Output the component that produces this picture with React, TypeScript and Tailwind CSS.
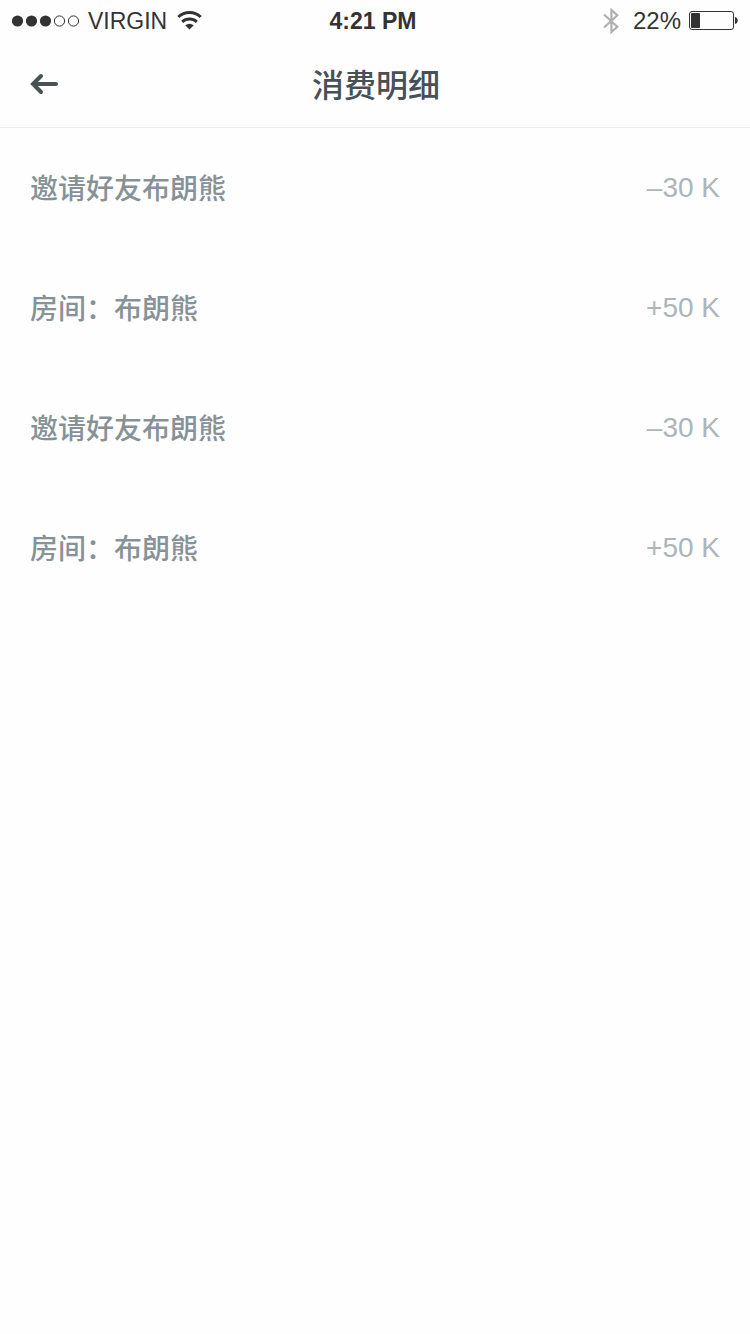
import React from "react";

type Entry = { id: number; label: string; amount: string };

const entries: Entry[] = [
  { id: 1, label: "邀请好友布朗熊", amount: "–30 K" },
  { id: 2, label: "房间：布朗熊", amount: "+50 K" },
  { id: 3, label: "邀请好友布朗熊", amount: "–30 K" },
  { id: 4, label: "房间：布朗熊", amount: "+50 K" },
];

function SignalDots() {
  return (
    <svg width="68" height="12" viewBox="0 0 68 12" aria-hidden="true">
      {[5.5, 19.5, 33.5].map((x) => (
        <circle key={x} cx={x} cy="6" r="5.6" fill="#333333" />
      ))}
      {[47.5, 61.5].map((x) => (
        <circle key={x} cx={x} cy="6" r="5.1" fill="none" stroke="#333333" />
      ))}
    </svg>
  );
}

function WifiIcon() {
  return (
    <svg width="25" height="19" viewBox="0 0 25 19" aria-hidden="true">
      <g fill="none" stroke="#333333" strokeWidth="3">
        <path d="M1.3 6a16.5 16.5 0 0 1 22.4 0" />
        <path d="M5.2 10.900a10.800 10.800 0 0 1 14.600 0" />
      </g>
      <path d="M12.5 18.500l-4.300-4.200a7 7 0 0 1 8.600 0z" fill="#333333" />
    </svg>
  );
}

function BluetoothIcon() {
  return (
    <svg width="16" height="28" viewBox="0 0 16 28" fill="none" stroke="#b0b0b0" strokeWidth="2.2" aria-hidden="true">
      <path d="M1 7.5l13.300 12.300-5.900 5.300V2.900l5.900 5.300L1 20.500" />
    </svg>
  );
}

function BatteryIcon() {
  return (
    <svg width="49" height="20" viewBox="0 0 49 20" aria-hidden="true">
      <rect x="0.5" y="0.5" width="44" height="18" rx="2.5" fill="none" stroke="#333333" />
      <rect x="2" y="2" width="9" height="15" rx="1" fill="#333333" />
      <path d="M46 6c3.600 .8 3.600 6.200 0 7z" fill="#333333" />
    </svg>
  );
}

function StatusBar() {
  return (
    <div className="grid h-10 grid-cols-[1fr_auto_1fr] items-center px-3 pt-0.5 text-[23px] text-[#333333]">
      <div className="flex items-center gap-2">
        <SignalDots />
        <span>VIRGIN</span>
        <span className="pb-0.5 pl-0.5">
          <WifiIcon />
        </span>
      </div>
      <span className="pr-1 font-bold">4:21 PM</span>
      <div className="flex items-center justify-end gap-2">
        <span className="pr-1.5">
          <BluetoothIcon />
        </span>
        <span className="text-2xl">22%</span>
        <BatteryIcon />
      </div>
    </div>
  );
}

export default function App() {
  return (
    <div
      lang="zh-CN"
      className="min-h-screen bg-[#fefefe] font-['Liberation_Sans','Noto_Sans_CJK_SC',sans-serif]"
    >
      <StatusBar />
      <header className="grid h-22 grid-cols-[1fr_auto_1fr] items-center border-b border-[#ebebeb] px-7">
        <button type="button" aria-label="返回" className="justify-self-start">
          <svg width="32" height="24" viewBox="0 0 32 24" fill="none" stroke="#485156" strokeWidth="4" strokeLinecap="round" strokeLinejoin="miter" aria-hidden="true">
            <path d="M28 12H5M13 4L5 12l8 8" />
          </svg>
        </button>
        <h1 className="pt-1 pl-0.5 text-[32px] font-medium text-[#465056]">消费明细</h1>
      </header>
      <main>
        <ul>
          {entries.map((entry) => (
            <li key={entry.id} className="flex h-30 items-center justify-between px-[30px] text-[28px]">
              <span className="pt-1 font-medium text-[#879297]">{entry.label}</span>
              <span className="text-[#acb5ba]">{entry.amount}</span>
            </li>
          ))}
        </ul>
      </main>
    </div>
  );
}
